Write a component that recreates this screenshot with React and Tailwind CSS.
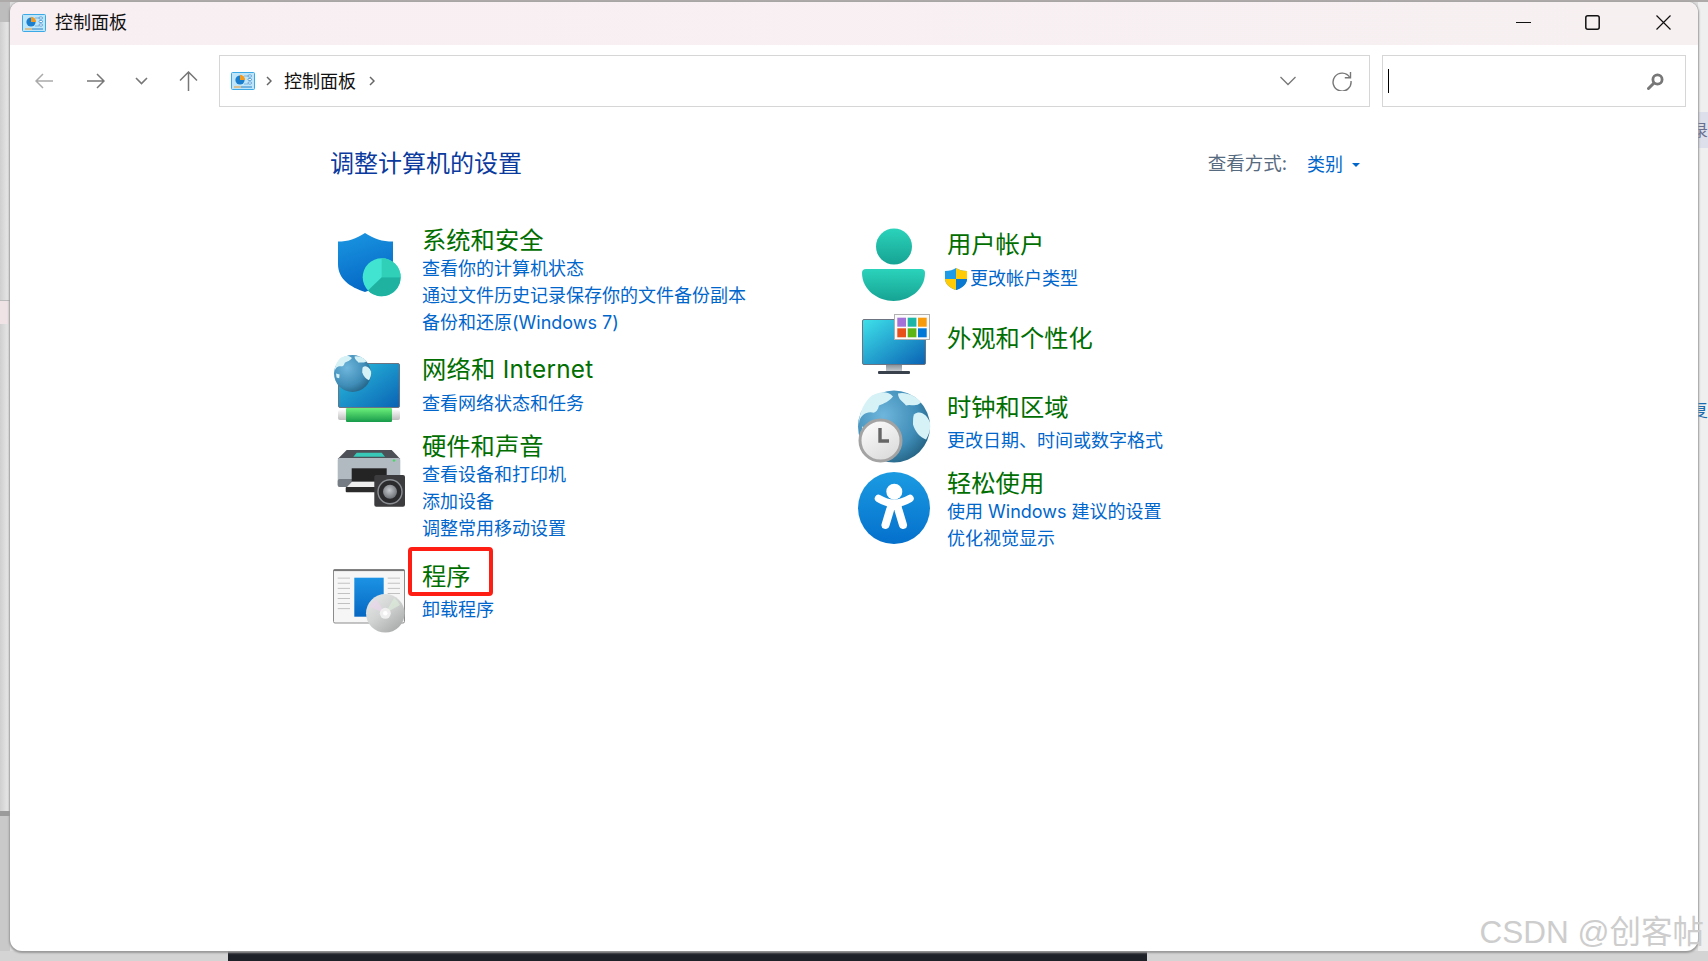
import React from "react";

const font = "font-['Inter','Noto_Sans_CJK_SC',sans-serif]";

function PanelIcon() {
  return (
    <svg width="24" height="18" viewBox="0 0 24 18">
      <rect x="0.5" y="0.5" width="23" height="17" rx="1" fill="#bfe6f8" stroke="#3aa9e6" />
      <circle cx="9" cy="8" r="4.6" fill="#1b7fd0" />
      <path d="M9 8V2.8A5 5 0 0 1 14 8Z" fill="#f39a1f" />
      <path d="M13 4h4M13 12h4" stroke="#6aa8d8" strokeWidth="0.8" />
      <rect x="17" y="3" width="3.5" height="2" rx="1" fill="#fff" stroke="#2a80c8" strokeWidth="0.7" />
      <rect x="17" y="6.5" width="3.5" height="2" rx="1" fill="#fff" stroke="#2a80c8" strokeWidth="0.7" />
      <rect x="17" y="10" width="3.5" height="2" rx="1" fill="#fff" stroke="#2a80c8" strokeWidth="0.7" />
      <path d="M3 15h7" stroke="#ef9a2c" strokeWidth="1" />
      <path d="M10 15h11" stroke="#2a80c8" strokeWidth="1" />
    </svg>
  );
}

function ShieldIcon() {
  return (
    <svg width="74" height="72" viewBox="0 0 74 72" className="overflow-visible">
      <defs>
        <linearGradient id="sh" x1="0" y1="0" x2="0.3" y2="1">
          <stop offset="0" stopColor="#1b97e2" />
          <stop offset="1" stopColor="#0569c6" />
        </linearGradient>
      </defs>
      <path d="M6 12.5C16 12.5 24 10 33 4C42 10 50 12.5 61 12.5V35C61 50 48 58 33 63C18 58 6 50 6 35Z" fill="url(#sh)" />
      <circle cx="49.7" cy="48.3" r="19" fill="#41e3d1" />
      <path d="M49.7 48.3V29.3A19 19 0 0 1 68.7 48.3Z" fill="#2fcfb8" />
      <path d="M49.7 48.3H68.7A19 19 0 0 1 36 61.5Z" fill="#1fb2a0" />
    </svg>
  );
}

// land masses for the two globes, drawn on a 72 unit disc
function Land() {
  return (
    <g fill="#d6f2f7">
      <path d="M1 33C2 24 9 21 14 22C18 23 20 19 21 15C26 13 31 11 35 6C30 0 21 1 14 5C7 10 1 22 1 33Z" />
      <path d="M4 36L11 38L10 45L5 44Z" />
      <path d="M40 3C47 1 58 5 63 12C58 17 52 13 48 15C45 11 40 9 40 3Z" />
      <path d="M56 24C62 19 69 24 72 32C73 38 71 44 68 49C62 47 57 41 55 34C55 30 55 26 56 24Z" />
    </g>
  );
}

function NetworkIcon() {
  return (
    <svg width="74" height="72" viewBox="0 0 74 72" className="overflow-visible">
      <defs>
        <linearGradient id="scr" x1="0" y1="0" x2="1" y2="1">
          <stop offset="0" stopColor="#2bc1de" />
          <stop offset="1" stopColor="#0a62b4" />
        </linearGradient>
        <linearGradient id="grn" x1="0" y1="0" x2="0" y2="1">
          <stop offset="0" stopColor="#6cf07a" />
          <stop offset="1" stopColor="#179a4a" />
        </linearGradient>
        <linearGradient id="cap" x1="0" y1="0" x2="0" y2="1">
          <stop offset="0" stopColor="#fafafa" />
          <stop offset="1" stopColor="#bdbdbd" />
        </linearGradient>
        <radialGradient id="glb" cx="0.35" cy="0.35" r="0.8">
          <stop offset="0" stopColor="#6fb6dc" />
          <stop offset="0.6" stopColor="#3f8db8" />
          <stop offset="1" stopColor="#1c5674" />
        </radialGradient>
      </defs>
      <rect x="6.5" y="11.5" width="61" height="44" rx="1.5" fill="url(#scr)" stroke="#6b7480" />
      <rect x="6" y="58" width="62" height="10" rx="2" fill="url(#cap)" />
      <rect x="14" y="56" width="46" height="14" rx="1" fill="url(#grn)" />
      <circle cx="20.5" cy="21.5" r="18.5" fill="url(#glb)" />
      <g transform="translate(2 3) scale(0.514)">
        <Land />
      </g>
    </svg>
  );
}

function PrinterIcon() {
  return (
    <svg width="74" height="72" viewBox="0 0 74 72" className="overflow-visible">
      <defs>
        <radialGradient id="cone" cx="0.45" cy="0.4" r="0.6">
          <stop offset="0" stopColor="#c4c8cc" />
          <stop offset="1" stopColor="#6f7378" />
        </radialGradient>
      </defs>
      <path d="M5.7 16L14.7 7H59.7L68.3 16Z" fill="#4d5157" />
      <path d="M21.3 13.7L24.7 9.7H49.7L53 13.7Z" fill="#38c9b8" />
      <rect x="5.7" y="15" width="62.6" height="29" rx="2" fill="#b2bac1" />
      <rect x="5.7" y="36" width="62.6" height="8" rx="2" fill="#767c83" />
      <circle cx="62" cy="17.5" r="1.2" fill="#45d866" />
      <rect x="19.7" y="25.3" width="35" height="13.4" fill="#242424" />
      <path d="M20 38.7H43V44H15Z" fill="#efefef" />
      <rect x="13.7" y="44" width="30" height="5.3" rx="1" fill="#2b2b2b" />
      <rect x="42.3" y="32" width="30.7" height="31.7" rx="2" fill="#3c3c3e" />
      <circle cx="58" cy="48.7" r="12" fill="#2b2b2d" stroke="#8b8f93" strokeWidth="1.4" />
      <circle cx="58" cy="48.7" r="7" fill="url(#cone)" />
    </svg>
  );
}

function ProgramIcon() {
  const left = [12.7, 17.8, 22.9, 28, 33.1, 38.2, 43.3];
  const right = [12.7, 17.8, 22.9, 28];
  return (
    <svg width="74" height="72" viewBox="0 0 74 72" className="overflow-visible">
      <defs>
        <linearGradient id="pb" x1="0" y1="0" x2="0" y2="1">
          <stop offset="0" stopColor="#1c93e4" />
          <stop offset="1" stopColor="#0567c2" />
        </linearGradient>
        <linearGradient id="cd" x1="0" y1="0" x2="0.8" y2="1">
          <stop offset="0" stopColor="#e9e9e9" />
          <stop offset="0.5" stopColor="#d2d4d4" />
          <stop offset="1" stopColor="#a8aaaa" />
        </linearGradient>
      </defs>
      <rect x="1.5" y="4.5" width="71" height="53.5" rx="1.5" fill="#f6f6f6" stroke="#8c8c8c" />
      <rect x="1.5" y="4.5" width="71" height="1.6" fill="#777" />
      {left.map((y) => (
        <rect key={y} x="5.7" y={y} width="12.3" height="0.8" fill="#b5b5b5" />
      ))}
      {right.map((y) => (
        <rect key={y} x="55.7" y={y} width="12.3" height="0.8" fill="#b5b5b5" />
      ))}
      <rect x="22.3" y="12.7" width="29.4" height="39" fill="url(#pb)" />
      <circle cx="53.3" cy="48.3" r="19.3" fill="url(#cd)" />
      <path d="M53.3 48.3L38 42A17 17 0 0 1 44 34Z" fill="#e9d6ea" opacity="0.7" />
      <path d="M53.3 48.3L62 33A17 17 0 0 1 68 40Z" fill="#dcebd8" opacity="0.7" />
      <circle cx="53.3" cy="48.3" r="5.5" fill="#efefef" />
      <circle cx="53.3" cy="48.3" r="2.2" fill="#fff" />
    </svg>
  );
}

function PersonIcon() {
  return (
    <svg width="74" height="72" viewBox="0 0 74 72" className="overflow-visible">
      <defs>
        <linearGradient id="pers" x1="0" y1="0" x2="0" y2="1">
          <stop offset="0" stopColor="#2bd3bb" />
          <stop offset="1" stopColor="#16a394" />
        </linearGradient>
      </defs>
      <circle cx="37" cy="18.5" r="18" fill="url(#pers)" />
      <path d="M9 41H64a4 4 0 0 1 4 4C68 62 52 73 36.5 73C21 73 5 62 5 45a4 4 0 0 1 4-4Z" fill="url(#pers)" />
    </svg>
  );
}

function AppearanceIcon() {
  const tiles = [
    [40.3, 5.7, "#a371d8"],
    [50.7, 5.7, "#1db5a5"],
    [61, 5.7, "#f79a0c"],
    [40.3, 16.3, "#e8511a"],
    [50.7, 16.3, "#5cb512"],
    [61, 16.3, "#0078d7"],
  ];
  return (
    <svg width="74" height="72" viewBox="0 0 74 72" className="overflow-visible">
      <defs>
        <linearGradient id="scr2" x1="0" y1="0" x2="1" y2="1">
          <stop offset="0" stopColor="#3ee2ea" />
          <stop offset="1" stopColor="#0a62b4" />
        </linearGradient>
        <linearGradient id="stand" x1="0" y1="0" x2="0" y2="1">
          <stop offset="0" stopColor="#8b949c" />
          <stop offset="1" stopColor="#c2c8cd" />
        </linearGradient>
      </defs>
      <rect x="5.5" y="7.5" width="63" height="45" rx="1.5" fill="url(#scr2)" stroke="#6b7480" />
      <rect x="29" y="53" width="16" height="6" fill="url(#stand)" />
      <rect x="21" y="59" width="32" height="3" rx="1" fill="#39424c" />
      <rect x="37.5" y="2.5" width="35" height="25" fill="#fbfbfb" stroke="#b0b0b0" />
      {tiles.map(([x, y, c]) => (
        <rect key={c} x={x} y={y} width="8.7" height="9" fill={c} />
      ))}
    </svg>
  );
}

function ClockIcon() {
  return (
    <svg width="74" height="72" viewBox="0 0 74 72" className="overflow-visible">
      <defs>
        <radialGradient id="glb2" cx="0.35" cy="0.35" r="0.8">
          <stop offset="0" stopColor="#6fb6dc" />
          <stop offset="0.6" stopColor="#3f8db8" />
          <stop offset="1" stopColor="#1c5674" />
        </radialGradient>
        <linearGradient id="face" x1="0" y1="0" x2="0.6" y2="1">
          <stop offset="0" stopColor="#ffffff" />
          <stop offset="1" stopColor="#dcdcdc" />
        </linearGradient>
      </defs>
      <circle cx="37" cy="35.5" r="36" fill="url(#glb2)" />
      <g transform="translate(1 -0.5)">
        <Land />
      </g>
      <circle cx="23.5" cy="49.5" r="20.5" fill="url(#face)" stroke="#a3a3a3" strokeWidth="3" />
      <path d="M23 37V50H32" fill="none" stroke="#666" strokeWidth="3.4" />
    </svg>
  );
}

function AccessIcon() {
  return (
    <svg width="74" height="72" viewBox="0 0 74 72" className="overflow-visible">
      <defs>
        <linearGradient id="acc" x1="0" y1="0" x2="0" y2="1">
          <stop offset="0" stopColor="#1b9be2" />
          <stop offset="1" stopColor="#0470cc" />
        </linearGradient>
      </defs>
      <circle cx="37" cy="36" r="36" fill="url(#acc)" />
      <circle cx="37.3" cy="19.7" r="8" fill="#fff" />
      <path d="M21.5 26.5Q37.3 36 53 26.5" fill="none" stroke="#fff" strokeWidth="7.5" strokeLinecap="round" />
      <path d="M37.3 31V38" stroke="#fff" strokeWidth="15" />
      <path d="M33 38L28.5 53M41.5 38L46 53" stroke="#fff" strokeWidth="8" strokeLinecap="round" />
    </svg>
  );
}

function Shield() {
  return (
    <svg width="22" height="22" viewBox="0 0 22 22" className="shrink-0">
      <path d="M11 0C14 2 17 3 22 3V11C22 16 17 20 11 22C5 20 0 16 0 11V3C5 3 8 2 11 0Z" fill="#1d9be6" />
      <path d="M11 0C14 2 17 3 22 3V11H11Z" fill="#ffcb05" />
      <path d="M11 11H0C0 16 5 20 11 22Z" fill="#ffcb05" />
      <path d="M11 11H22C22 16 17 20 11 22Z" fill="#0a78cf" />
    </svg>
  );
}

function Category({ icon, iconClass, title, titleClass = "", links = [], linksClass = "", className = "" }) {
  return (
    <div className={`flex gap-4 ${className}`}>
      <div className={`w-[74px] shrink-0 h-0 ${iconClass}`}>{icon}</div>
      <div>
        <div className={`text-[24.3px] leading-[30px] text-[#006e00] whitespace-nowrap ${titleClass}`}>{title}</div>
        <div className={linksClass}>
          {links.map((l) => (
            <div key={l} className="text-[18px] leading-[27px] text-[#0066cc] whitespace-nowrap">
              {l}
            </div>
          ))}
        </div>
      </div>
    </div>
  );
}

export default function App() {
  return (
    <div className={`relative h-[961px] w-[1708px] overflow-hidden bg-[#dcdcdc] flex flex-col ${font}`}>
      <div className="h-[2px] shrink-0 bg-[#aeaaaa]" />

      <div className="flex-1 flex min-h-0">
        <div className="w-[10px] shrink-0 flex flex-col bg-gradient-to-r from-[#cfcfcf] to-[#ececec]">
          <div className="h-[20px] bg-[#bdbdbd]" />
          <div className="h-[278px]" />
          <div className="h-[24px] bg-[#efe3e6] border-t border-[#bbb]" />
          <div className="h-[487px]" />
          <div className="h-[5px] bg-[#9b9b9b]" />
          <div className="flex-1 bg-[#c9c9c9]" />
        </div>

        {/* the control panel window */}
        <div className="relative flex-1 min-w-0 bg-white rounded-t-[10px] rounded-b-[12px] overflow-hidden flex flex-col shadow-[0_1px_2px_1px_#999]">
          <div className="h-[43px] shrink-0 bg-gradient-to-r from-[#f8eff3] to-[#f7f0f1] flex items-center pl-[12px] pr-[27px] pb-[2px]">
            <PanelIcon />
            <span className="ml-[9px] text-[18px] leading-none text-[#111]">控制面板</span>
            <div className="ml-auto flex items-center">
              <svg width="15" height="15" viewBox="0 0 15 15">
                <path d="M0 7.5H15" stroke="#111" strokeWidth="1.2" />
              </svg>
              <svg width="15" height="15" viewBox="0 0 15 15" className="ml-[54px]">
                <rect x="0.8" y="0.8" width="13.4" height="13.4" rx="2" fill="none" stroke="#111" strokeWidth="1.5" />
              </svg>
              <svg width="15" height="15" viewBox="0 0 15 15" className="ml-[56px]">
                <path d="M0.5 0.5L14.5 14.5M14.5 0.5L0.5 14.5" stroke="#111" strokeWidth="1.2" />
              </svg>
            </div>
          </div>

          <div className="h-[62px] shrink-0 flex items-start pt-[10px] pl-[25px] pr-[12px]">
            <div className="h-[52px] flex items-center w-[184px] shrink-0">
              <svg width="18" height="16" viewBox="0 0 18 16" className="mr-[34px]">
                <path d="M18 8H1M8 1L1 8L8 15" fill="none" stroke="#aaa" strokeWidth="1.5" />
              </svg>
              <svg width="18" height="16" viewBox="0 0 18 16" className="mr-[30px]">
                <path d="M0 8H17M10 1L17 8L10 15" fill="none" stroke="#777" strokeWidth="1.5" />
              </svg>
              <svg width="13" height="8" viewBox="0 0 13 8" className="mr-[31px]">
                <path d="M1 1L6.5 6.5L12 1" fill="none" stroke="#777" strokeWidth="1.6" />
              </svg>
              <svg width="19" height="20" viewBox="0 0 19 20">
                <path d="M9.5 20V1M1 9.5L9.5 1L18 9.5" fill="none" stroke="#777" strokeWidth="1.5" />
              </svg>
            </div>

            <div className="h-[52px] w-[1151px] shrink-0 border border-[#d6d6d6] flex items-center pl-[11px] pr-[17px]">
              <PanelIcon />
              <svg width="6" height="10" viewBox="0 0 6 10" className="ml-[11px]">
                <path d="M1 1L5 5L1 9" fill="none" stroke="#666" strokeWidth="1.5" />
              </svg>
              <span className="ml-[12px] mt-[1px] text-[18px] leading-none text-[#111]">控制面板</span>
              <svg width="6" height="10" viewBox="0 0 6 10" className="ml-[13px]">
                <path d="M1 1L5 5L1 9" fill="none" stroke="#666" strokeWidth="1.5" />
              </svg>
              <svg width="16" height="10" viewBox="0 0 16 10" className="ml-auto">
                <path d="M0.5 1L8 8.5L15.5 1" fill="none" stroke="#777" strokeWidth="1.3" />
              </svg>
              <svg width="20" height="20" viewBox="0 0 20 20" className="ml-[36px]">
                <path d="M17.8 6.5A9 9 0 1 0 19 10" fill="none" stroke="#777" strokeWidth="1.4" />
                <path d="M18.5 1V6.8H12.8" fill="none" stroke="#777" strokeWidth="1.4" />
              </svg>
            </div>

            <div className="h-[52px] ml-[12px] flex-1 border border-[#d6d6d6] flex items-center pl-[5px] pr-[21px]">
              <div className="w-[1px] h-[24px] bg-black" />
              <svg width="17" height="17" viewBox="0 0 17 17" className="ml-auto">
                <circle cx="10.5" cy="6.5" r="4.6" fill="none" stroke="#777" strokeWidth="2.8" />
                <path d="M7 10L1.5 15.5" stroke="#777" strokeWidth="3" strokeLinecap="round" />
              </svg>
            </div>
          </div>

          <div className="pl-[320px] pt-[41px]">
            <div className="w-[1030px] h-[32px] flex items-center">
              <h1 className="text-[24px] leading-[32px] text-[#0b3a9e]">调整计算机的设置</h1>
              <div className="ml-auto flex items-center">
                <span className="text-[18.5px] text-[#566a80] whitespace-nowrap">查看方式:</span>
                <span className="ml-[20px] text-[18px] text-[#0066cc]">类别</span>
                <span className="ml-[9px] mt-[1px] w-0 h-0 border-x-[4px] border-x-transparent border-t-[4px] border-t-[#0066cc]" />
              </div>
            </div>

            <div className="flex mt-[45px] ml-[2px]">
              <div className="w-[525px] shrink-0">
                <Category
                  icon={<ShieldIcon />}
                  iconClass="mt-[4px]"
                  title="系统和安全"
                  links={["查看你的计算机状态", "通过文件历史记录保存你的文件备份副本", "备份和还原(Windows 7)"]}
                />
                <Category
                  className="mt-[18px]"
                  icon={<NetworkIcon />}
                  iconClass="-mt-[2px]"
                  title="网络和 Internet"
                  titleClass="tracking-[0.25px]"
                  links={["查看网络状态和任务"]}
                  linksClass="mt-[6px]"
                />
                <Category
                  className="mt-[14px]"
                  icon={<PrinterIcon />}
                  iconClass="mt-[12px]"
                  title="硬件和声音"
                  links={["查看设备和打印机", "添加设备", "调整常用移动设置"]}
                />
                <Category
                  className="mt-[19px]"
                  icon={<ProgramIcon />}
                  iconClass="mt-[4px]"
                  title="程序"
                  links={["卸载程序"]}
                  linksClass="mt-[5px]"
                />
              </div>
              <div className="pt-[4px]">
                <Category icon={<PersonIcon />} iconClass="-mt-[1px]" title="用户帐户" />
                <div className="flex items-center ml-[88px] mt-[6px] h-[27px]">
                  <Shield />
                  <span className="ml-[3px] text-[18px] leading-[27px] text-[#0066cc] whitespace-nowrap">更改帐户类型</span>
                </div>
                <Category
                  className="mt-[31px]"
                  icon={<AppearanceIcon />}
                  iconClass="-mt-[11px]"
                  title="外观和个性化"
                />
                <Category
                  className="mt-[39px]"
                  icon={<ClockIcon />}
                  iconClass="-mt-[1px]"
                  title="时钟和区域"
                  links={["更改日期、时间或数字格式"]}
                  linksClass="mt-[5px]"
                />
                <Category
                  className="mt-[14px]"
                  icon={<AccessIcon />}
                  iconClass="mt-[4px]"
                  title="轻松使用"
                  links={["使用 Windows 建议的设置", "优化视觉显示"]}
                />
              </div>
            </div>
          </div>
        </div>

        <div className="w-[10px] shrink-0 flex flex-col bg-[#efefef] overflow-hidden">
          <div className="h-[110px]" />
          <div className="h-[36px] bg-[#dde0ea] flex items-center justify-end pl-[2px]">
            <span className="shrink-0 text-[16px] text-[#6a6f90]">录</span>
          </div>
          <div className="h-[252px]" />
          <div className="h-[20px] flex items-center justify-end pl-[2px]">
            <span className="shrink-0 text-[18px] text-[#1a6ab0]">复</span>
          </div>
        </div>
      </div>

      <div className="h-[10px] shrink-0 flex bg-[#d4d4d4]">
        <div className="ml-[228px] w-[919px] bg-[#1f2129]" />
      </div>

      {/* red annotation around the programs entry */}
      <div className="absolute left-[408px] top-[547px] w-[85px] h-[49px] border-[4px] border-[#ff1e14] rounded-[4px]" />

      <div className="absolute right-[4px] top-[909px] text-[31.5px] leading-[46px] text-[#cdcdcd] whitespace-nowrap font-['Liberation_Sans','Noto_Sans_CJK_SC',sans-serif]">
        CSDN @创客帖
      </div>
    </div>
  );
}
